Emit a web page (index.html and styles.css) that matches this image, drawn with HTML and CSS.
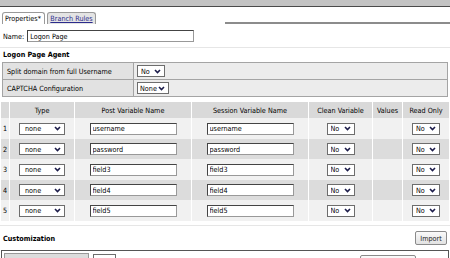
FILE: index.html
```html
<!DOCTYPE html>
<html lang="en">
<head>
<meta charset="UTF-8">
<title>Logon Page Properties</title>
<link rel="stylesheet" href="styles.css">
</head>
<body>
<div class="topbar"></div>
<div class="tabrow">
<div class="tab active">Properties*</div>
<a class="tab" href="#">Branch Rules</a>
<div class="tabline"></div>
</div>
<div class="page">
<div class="name-row">
<label for="name">Name:</label>
<input class="txt name" id="name" value="Logon Page">
</div>
<div class="sep"></div>
<h3>Logon Page Agent</h3>
<table class="props">
<tr>
<td class="lbl">Split domain from full Username</td>
<td><select class="sel sel-no"><option>No</option></select></td>
</tr>
<tr>
<td class="lbl">CAPTCHA Configuration</td>
<td><select class="sel sel-none"><option>None</option></select></td>
</tr>
</table>
<table class="vars">
<thead>
<tr>
<th class="c-num"></th>
<th class="c-type">Type</th>
<th class="c-post">Post Variable Name</th>
<th class="c-sess">Session Variable Name</th>
<th class="c-clean">Clean Variable</th>
<th class="c-vals">Values</th>
<th class="c-ro">Read Only</th>
</tr>
</thead>
<tbody id="varRows"></tbody>
</table>
<div class="sep sep-low"></div>
<div class="custom-head">
<h3>Customization</h3>
<button class="btn">Import</button>
</div>
<div class="custom-box">
<div class="custom-lbl"></div>
<div class="custom-val">
<select class="sel sel-small"><option></option></select>
<button class="btn restore">Restore all defaults</button>
</div>
</div>
</div>
<script>
const fields = ['username', 'password', 'field3', 'field4', 'field5'];
const rows = document.getElementById('varRows');
fields.forEach((f, i) => {
    const tr = document.createElement('tr');
    tr.innerHTML = `
<td class="num">${i + 1}</td>
<td><select class="sel sel-type"><option>none</option></select></td>
<td><input class="txt var" value="${f}"></td>
<td><input class="txt var" value="${f}"></td>
<td><select class="sel sel-no"><option>No</option></select></td>
<td></td>
<td><select class="sel sel-no"><option>No</option></select></td>
    `;
    rows.appendChild(tr);
});
</script>
</body>
</html>
```

FILE: styles.css
```css
* {
    box-sizing: border-box;
}
body {
    margin: 0;
    background: #fff;
    color: #000;
    font-family: "DejaVu Sans Condensed", "DejaVu Sans", "Liberation Sans", sans-serif;
    font-size: 7.2px;
    overflow: hidden;
}
.topbar {
    height: 7px;
    background: #c3c3c3;
    border-bottom: 1px solid #4a4a4a;
}
.tabrow {
    display: flex;
    align-items: flex-end;
    gap: 2px;
    margin-top: 3px;
    padding-left: 2px;
}
.tab {
    height: 12px;
    line-height: 11px;
    padding: 0 2px;
    border: 1px solid #999;
    border-bottom: none;
    border-radius: 3px 3px 0 0;
    background: #e4e4e4;
    color: #2b2b8c;
    text-decoration: underline;
    white-space: nowrap;
}
.tab.active {
    width: 43px;
    background: #fff;
    color: #000;
    text-decoration: none;
}
a.tab {
    width: 49px;
    text-align: center;
}
.tabline {
    margin-left: auto;
    width: 225px;
    height: 14px;
    border-bottom: 2px solid #8c8c8c;
}
.page {
    padding: 0 2px;
}
.name-row {
    display: flex;
    align-items: center;
    gap: 3px;
    margin-top: 6px;
    padding-left: 1px;
}
.txt {
    height: 12px;
    padding: 0 2px;
    border: 1px solid #444;
    border-right-color: #999;
    border-bottom-color: #999;
    font: inherit;
    color: #000;
    background: #fff;
}
.txt.name {
    width: 167px;
}
.sep {
    margin: 5px -2px 0;
    border-top: 1px solid #e6e6e6;
}
h3 {
    margin: 0;
    padding-left: 1px;
    font-size: 7.2px;
    line-height: 13px;
}
.props {
    width: 100%;
    margin-top: 1px;
    border-collapse: collapse;
    border: 1px solid #a4a4a4;
}
.props td {
    height: 17px;
    padding: 0 3px;
    border: 1px solid #a4a4a4;
    background: #ececec;
}
.props td.lbl {
    width: 131px;
    padding-left: 4px;
    background: #e2e2e2;
    white-space: nowrap;
}
.sel {
    appearance: none;
    height: 12px;
    padding: 0 10px 0 3px;
    border: 1px solid #6d6d6d;
    border-radius: 0;
    font: inherit;
    color: #000;
    background: #fff url("data:image/svg+xml,%3Csvg xmlns='http://www.w3.org/2000/svg' width='7' height='5'%3E%3Cpath d='M1 1l2.5 2.5L6 1' fill='none' stroke='%231c1c4a' stroke-width='1.6'/%3E%3C/svg%3E") no-repeat right 3px center;
    vertical-align: middle;
}
.sel-no {
    width: 28px;
}
.sel-none {
    width: 32px;
    padding-left: 2px;
}
.sel-type {
    width: 46px;
    padding-left: 5px;
}
.sel-small {
    width: 23px;
}
.vars {
    width: 450px;
    margin: 5px -2px 0;
    border-collapse: separate;
    border-spacing: 1px 0;
    table-layout: fixed;
}
.vars th {
    height: 16px;
    font-weight: normal;
    background: #d9d9d9;
}
.vars td {
    height: 20px;
    text-align: center;
    background: #dcdcdc;
}
.vars tbody tr:nth-child(odd) td {
    height: 21px;
    background: #f1f1f1;
}
.vars td.num {
    text-align: left;
    padding-left: 2px;
}
.c-num { width: 8px; }
.c-type { width: 64px; }
.c-post { width: 116px; }
.c-sess { width: 116px; }
.c-clean { width: 63px; }
.c-vals { width: 29px; }
.c-ro { width: 46px; }
.txt.var {
    width: 87px;
}
.sep-low {
    margin-top: 4px;
}
.custom-head {
    display: flex;
    justify-content: space-between;
    align-items: center;
    height: 24px;
}
.btn {
    height: 14px;
    padding: 0 3px;
    border: 1px solid #8a8a8a;
    border-radius: 2px;
    background: linear-gradient(#fafafa, #e2e2e2);
    font: inherit;
    color: #222;
}
.custom-head .btn {
    width: 32px;
    margin-right: 1px;
}
.custom-box {
    display: flex;
    height: 22px;
    margin: 0 -1px;
    border: 1px solid #555;
    padding: 2px 0 0 2px;
}
.custom-lbl {
    width: 85px;
    background: #dcdcdc;
    border: 1px solid #999;
}
.custom-val {
    flex: 1;
    display: flex;
    align-items: flex-start;
    padding: 1px 0 0 4px;
}
.restore {
    width: 56px;
    margin: 1px 32px 0 auto;
    white-space: nowrap;
    overflow: hidden;
}
```
